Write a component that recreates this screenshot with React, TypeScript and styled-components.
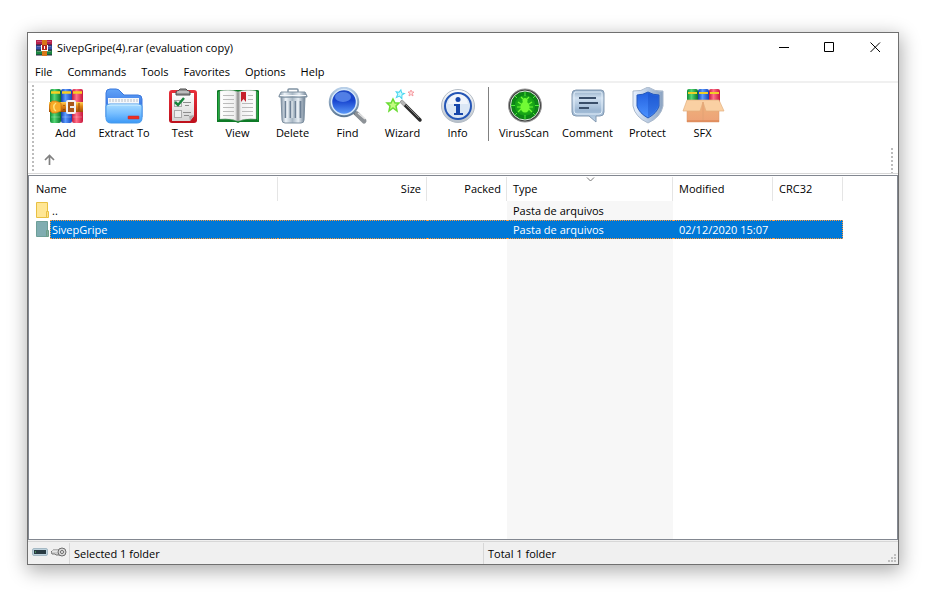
import React from "react";
import styled, { createGlobalStyle, css } from "styled-components";

const GlobalStyle = createGlobalStyle`
  * { box-sizing: border-box; }
  body {
    margin: 0;
    background: #fff;
    color: #000;
    font: 11px/16px "Open Sans", "Noto Sans", sans-serif;
  }
  button { font: inherit; color: inherit; background: none; border: 0; padding: 0; margin: 0; }
`;

const Page = styled.div`
  display: grid;
  min-height: 100vh;
  padding: 32px 42px 37px 27px;
`;

const Window = styled.main`
  display: flex;
  flex-direction: column;
  min-width: 0;
  background: #fff;
  border: 1px solid #707070;
  box-shadow: 1px 5px 18px 1px rgba(0, 0, 0, 0.33);
`;

const TitleBar = styled.header`
  display: flex;
  align-items: center;
  height: 29px;
  padding-left: 8px;
  gap: 5px;
`;

const Title = styled.h1`
  flex: 1;
  margin: 0;
  font-size: 11px;
  font-weight: 400;
  white-space: nowrap;
`;

const Captions = styled.div`
  display: flex;
`;

const CaptionButton = styled.button`
  display: grid;
  place-items: center;
  width: 46px;
  height: 29px;
`;

const MenuBar = styled.nav`
  display: flex;
  height: 21px;
  border-bottom: 2px solid #f0f0f0;
`;

const MenuItem = styled.button`
  padding: 1px 8px 0 7px;
  height: 19px;
`;

const Rebar = styled.section`
  display: flex;
  height: 91px;
  padding: 0 5px 0 4px;
  border-bottom: 1px solid #d7d7d7;
`;

const Gripper = styled.div`
  width: 2px;
  background: repeating-linear-gradient(transparent 0 2px, #bdbdbd 2px 4px);
`;

const Bands = styled.div`
  display: flex;
  flex: 1;
  flex-direction: column;
`;

const Tools = styled.div`
  display: flex;
  height: 63px;
  padding-left: 4px;
`;

const ToolButton = styled.button<{ $width: number }>`
  display: flex;
  flex-direction: column;
  align-items: center;
  width: ${(p) => p.$width}px;
  padding-top: 4px;
  white-space: nowrap;
  svg { flex: none; }
`;

const ToolDivider = styled.div`
  width: 1px;
  height: 54px;
  margin: 4px 4px 0 3px;
  background: #808080;
`;

const AddressBand = styled.div`
  display: flex;
  flex: 1;
  justify-content: space-between;
  padding-left: 4px;
`;

const UpButton = styled.button`
  display: grid;
  place-items: center;
  width: 22px;
`;

const ListPanel = styled.section`
  display: grid;
  flex: 1;
  margin-top: 1px;
  border: 1px solid #828790;
  overflow: hidden;
`;

const FileTable = styled.table`
  width: 814px;
  table-layout: fixed;
  border-collapse: separate;
  border-spacing: 0;
`;

const Column = styled.col<{ $width: number }>`
  width: ${(p) => p.$width}px;
`;

const Heading = styled.th<{ $right?: boolean }>`
  height: 25px;
  padding: 0 6px;
  font-weight: 400;
  text-align: ${(p) => (p.$right ? "right" : "left")};
  background: linear-gradient(#e5e5e5, #e5e5e5) right bottom / 1px 24px no-repeat #fff;
  &:first-child { padding-left: 7px; }
`;

const SortHeading = styled(Heading)`
  position: relative;
  svg { position: absolute; top: 1px; left: 50%; margin-left: -4px; }
`;

const selectedCell = css`
  color: #fff;
  background: #0078d7;
  border-top: 1px dotted #ff9a3c;
  border-bottom: 1px dotted #ff9a3c;
`;

const Cell = styled.td<{ $sorted?: boolean; $selected?: boolean }>`
  height: 19px;
  padding: 0 6px;
  line-height: 17px;
  white-space: nowrap;
  background: ${(p) => (p.$sorted ? "#f7f7f7" : "transparent")};
  ${(p) => p.$selected && selectedCell}
  &:last-child { border-right: ${(p) => (p.$selected ? "1px dotted #ff9a3c" : "0")}; }
`;

const NameCell = styled.td`
  height: 19px;
  padding: 0;
`;

const NameContent = styled.div`
  display: flex;
  padding-left: 7px;
  svg { flex: none; }
`;

const NameLabel = styled.span<{ $selected?: boolean }>`
  flex: 1;
  height: 19px;
  padding: 1px 0 0 2px;
  line-height: 17px;
  ${(p) => p.$selected && css`${selectedCell} padding: 0 0 0 1px; border-left: 1px dotted #ff9a3c;`}
`;

const Filler = styled.td<{ $sorted?: boolean }>`
  padding: 0;
  background: ${(p) => (p.$sorted ? "#f7f7f7" : "transparent")};
`;

const StatusBar = styled.footer`
  display: grid;
  grid-template-columns: 41px 414px 1fr auto;
  height: 24px;
  padding-top: 1px;
  background: linear-gradient(#d7d7d7, #d7d7d7) 0 1px / 100% 1px no-repeat #f0f0f0;
`;

const StatusCell = styled.div`
  display: flex;
  align-items: center;
  gap: 3px;
  margin-top: 2px;
  padding-left: 4px;
  & + & { border-left: 1px solid #d7d7d7; }
`;

const StatusIcon = styled.svg`
  flex: none;
  align-self: start;
  margin-top: 4px;
`;

const SizeGrip = styled.svg`
  align-self: end;
  margin: 0 2px 2px 0;
`;

const Icon = ({ children }: { children: React.ReactNode }) => (
  <svg width="44" height="38" viewBox="0 0 44 38" aria-hidden="true">{children}</svg>
);

type Stop = [string, string];
const Grad = ({ id, stops, flat }: { id: string; stops: Stop[]; flat?: boolean }) => (
  <linearGradient id={id} x1="0" y1="0" x2={flat ? "1" : "0"} y2={flat ? "0" : "1"}>
    {stops.map(([o, c], i) => <stop key={i} offset={o} stopColor={c} />)}
  </linearGradient>
);

const AddIcon = () => (
  <Icon>
    <Grad id="aG" flat stops={[["0", "#0d8a35"], [".4", "#55d875"], ["1", "#07732a"]]} />
    <Grad id="aB" flat stops={[["0", "#123fa8"], [".4", "#5c9cff"], ["1", "#1642b8"]]} />
    <Grad id="aR" flat stops={[["0", "#c2183d"], [".4", "#ff7189"], ["1", "#c8163b"]]} />
    <Grad id="aS" stops={[["0", "#ffd35a"], [".4", "#e58a16"], ["1", "#a04b06"]]} />
    <rect x="6" y="2" width="11" height="34" rx="2" fill="url(#aG)" />
    <rect x="17" y="2" width="11" height="34" rx="2" fill="url(#aB)" />
    <rect x="28" y="2" width="11" height="34" rx="2" fill="url(#aR)" />
    <path d="M7 5.500h9M18 5.500h9M29 5.500h9" stroke="#f7cf23" strokeWidth="2.500" />
    <path d="M7 30h9M18 30h9M29 30h9" stroke="#fff" strokeOpacity=".25" />
    <path d="M5 15h34v10H5z" fill="url(#aS)" />
    <path d="M8 14h4l5 2v8l-5 2H8c-3-4-3-8 0-12z" fill="#f8aa27" stroke="#c9720f" strokeWidth=".700" />
    <path d="M12 16c-3 2-3 6 0 8" fill="none" stroke="#ffe07c" strokeWidth="1.500" />
    <rect x="23" y="14" width="8" height="12" rx="1" fill="#a8581a" stroke="#f3f3f3" strokeWidth="2" />
    <path d="M26 20h5" stroke="#eee" strokeWidth="2" />
    <path d="M20 18v.500M20 22v.500" stroke="#703208" strokeWidth="2" />
    <path d="M35 16v8" stroke="#8d4709" />
  </Icon>
);

const ExtractIcon = () => (
  <Icon>
    <Grad id="eB" stops={[["0", "#62a5f8"], ["1", "#245bd8"]]} />
    <Grad id="eF" stops={[["0", "#a9ddff"], [".5", "#77beff"], ["1", "#3c99f7"]]} />
    <path d="M4 30V6q0-4 4-4h6q3 0 5 3l3 3h14q4 0 4 4v18z" fill="url(#eB)" stroke="#3b78dd" />
    <path d="M6 11h31v9H6z" fill="#f5f8fb" />
    <path d="M8 12v3m3-3v3m3-3v3m3-3v3m3-3v3m3-3v3m3-3v3m3-3v3m3-3v3m3-3v3" stroke="#b8bec6" />
    <path d="M4 19q0-2 4-2h28q4 0 4 2v12q0 5-5 5H9q-5 0-5-5z" fill="url(#eF)" stroke="#4699eb" />
    <path d="M6 19q0-1 3-1h26q3 0 3 1" fill="none" stroke="#d5f1ff" />
    <rect x="26" y="29" width="11" height="3" rx=".500" fill="#ed2e20" stroke="#bb2f34" strokeWidth=".500" />
  </Icon>
);

const TestIcon = () => (
  <Icon>
    <Grad id="tR" stops={[["0", "#e9313b"], ["1", "#be101c"]]} />
    <Grad id="tP" stops={[["0", "#fff"], ["1", "#d4d4d4"]]} />
    <rect x="8" y="3" width="28" height="33" rx="3" fill="url(#tR)" />
    <path d="M11 6h22v23l-4 5H11z" fill="url(#tP)" />
    <path d="M33 28l-5 1 1 5z" fill="#aaa" />
    <path d="M15 8V5q0-1 2-1l2-2h6l2 2q2 0 2 1v3z" fill="#929292" stroke="#4c4c4c" />
    <path d="M16 5h12" stroke="#e8e8e8" />
    <rect x="13.500" y="13.500" width="7" height="6" fill="#eee" stroke="#aaa" />
    <rect x="13.500" y="23.500" width="7" height="7" fill="#eee" stroke="#aaa" />
    <path d="M14 15l3 3 6-7" fill="none" stroke="#16853b" strokeWidth="2.500" />
    <path d="M22 15.500h8M24 18.500h4M22 25.500h8M23 28.500h5" stroke="#8d8d8d" />
  </Icon>
);

const ViewIcon = () => (
  <Icon>
    <Grad id="vP" flat stops={[["0", "#fff"], [".42", "#eee"], [".5", "#8c8c8c"], [".58", "#f0f0f0"], ["1", "#fff"]]} />
    <path d="M1 4q0-1 2-1h38q2 0 2 1v31H24l-2 1-2-1H1z" fill="#0d7a26" />
    <path d="M2 5h1v28H2zM41 5h1v28h-1z" fill="#25aa40" />
    <path d="M4 4q11-2 18 1 7-3 18-1v28q-11-1-18 2-7-3-18-2z" fill="url(#vP)" stroke="#c9c9c9" strokeWidth=".500" />
    <path d="M7 8.500h11M7 12.500h11M7 16.500h11M7 20.500h11M7 24.500h11M7 28.500h11M26 16.500h11M26 20.500h11M26 24.500h11M26 28.500h11M32 8.500h5M32 12.500h5" stroke="#bbb" />
    <path d="M25 5h5v10l-2.500-3-2.500 3z" fill="#c61f2b" />
  </Icon>
);

const DeleteIcon = () => (
  <Icon>
    <Grad id="dM" flat stops={[["0", "#8193a5"], [".2", "#eef4f9"], [".48", "#a9b8c5"], [".72", "#e7eef4"], ["1", "#6c7f92"]]} />
    <path d="M17 6V3q0-1 1-1h8q1 0 1 1v3" fill="none" stroke="#8092a3" strokeWidth="1.500" />
    <path d="M10 10h24l-1 23q0 3-3 3H14q-3 0-3-3z" fill="url(#dM)" stroke="#7d8fa0" />
    <path d="M14.500 14v17M19.500 14v17M24.500 14v17M29.500 14v17" stroke="#6e8196" strokeWidth="1.800" />
    <path d="M16 14v17M21 14v17M26 14v17" stroke="#f3f7fa" />
    <path d="M8 9l2-4h24l2 4v1H8z" fill="url(#dM)" stroke="#8294a4" />
    <path d="M9 8.500h26" stroke="#f5f8fb" />
  </Icon>
);

const FindIcon = () => (
  <Icon>
    <Grad id="fB" stops={[["0", "#224cc2"], [".45", "#1744cf"], ["1", "#65a6ff"]]} />
    <Grad id="fG" stops={[["0", "#b8cfe8"], ["1", "#5d7894"]]} />
    <path d="M28 25l8 7" stroke="#606970" strokeWidth="4" />
    <path d="M31 27l7 7" stroke="#8d9297" strokeWidth="5" strokeLinecap="round" />
    <path d="M32 26l7 6" stroke="#e4e4e4" strokeWidth="1.500" />
    <circle cx="18" cy="15" r="14" fill="url(#fB)" stroke="url(#fG)" strokeWidth="2.500" />
    <circle cx="18" cy="15" r="12.500" fill="none" stroke="#d8eafa" strokeWidth="1.500" />
    <ellipse cx="17" cy="10" rx="8" ry="5" fill="#6f9cf5" opacity=".65" />
  </Icon>
);

const star = "M0-6 2-2 6-2 3 1 4 6 0 3-4 6-3 1-6-2-2-2z";
const WizardIcon = () => (
  <Icon>
    <g strokeWidth="1.500">
      <path transform="translate(12 18)" d={star} fill="#c4fb80" stroke="#6bdc35" />
      <path transform="translate(19 7) rotate(12) scale(.7)" d={star} fill="#c9fbff" stroke="#4cd6ef" />
      <path transform="translate(30 6) scale(.5)" d={star} fill="#ffdcdc" stroke="#f28a92" />
    </g>
    <path d="M21 15l18 18" stroke="#2b2b2b" strokeWidth="3.500" strokeLinecap="round" />
    <path d="M20 14l4 4" stroke="#b5b5b5" strokeWidth="3.500" />
    <path d="M25 18l13 13" stroke="#858585" />
  </Icon>
);

const InfoIcon = () => (
  <Icon>
    <Grad id="iS" stops={[["0", "#fff"], ["1", "#b7c0ca"]]} />
    <circle cx="22" cy="19" r="16.500" fill="url(#iS)" stroke="#b4bcc5" />
    <circle cx="22" cy="19" r="13" fill="#dbe7f5" stroke="#2455b5" strokeWidth="2" />
    <path d="M12 17a10 10 0 0 1 20 0" fill="#fff" opacity=".6" />
    <circle cx="22" cy="12.500" r="2.500" fill="#1646aa" />
    <path d="M18 17h6v9h3v2h-9v-2h2v-7h-2z" fill="#1646aa" />
  </Icon>
);

const VirusIcon = () => (
  <Icon>
    <radialGradient id="vG"><stop stopColor="#2fc31c" /><stop offset=".6" stopColor="#17a516" /><stop offset="1" stopColor="#087513" /></radialGradient>
    <circle cx="23" cy="18.500" r="16.500" fill="#444" stroke="#9a9a9a" />
    <circle cx="23" cy="18.500" r="14.500" fill="url(#vG)" stroke="#d9e8d9" />
    <circle cx="23" cy="18.500" r="11" fill="none" stroke="#0a7d1a" />
    <path d="M23 5v4m0 19v4M9 18.500h4m20 0h4M13 9l2 2M33 9l-2 2M13 28l2-2M33 28l-2-2" stroke="#4ff03a" />
    <ellipse cx="23" cy="20" rx="4.500" ry="5.500" fill="#72fb35" />
    <circle cx="23" cy="13.500" r="2.500" fill="#72fb35" />
    <path d="M19 17l-3-2m3 5h-4m4 2l-3 3m11-8l3-2m-3 5h4m-4 2l3 3M21 12l-2-2m6 2l2-2" stroke="#72fb35" strokeWidth="1.200" />
  </Icon>
);

const CommentIcon = () => (
  <Icon>
    <Grad id="cB" stops={[["0", "#8ea9c4"], [".25", "#d0e0f0"], [".65", "#9bb6d2"], ["1", "#c2d7ea"]]} />
    <path d="M10 3h25q3 0 3 3v19q0 4-4 4h-4v6l-7-6H10q-4 0-4-4V7q0-4 4-4z" fill="url(#cB)" stroke="#8399b1" />
    <path d="M9 5h26q1 0 1 2v17q0 3-3 3H11q-3 0-3-3V7z" fill="none" stroke="#e3effa" />
    <path d="M13 11h17M13 16h19M13 21h10" stroke="#3a4f6a" strokeWidth="2" />
  </Icon>
);

const ProtectIcon = () => (
  <Icon>
    <Grad id="pS" flat stops={[["0", "#e7f1ff"], ["1", "#8ba3c2"]]} />
    <Grad id="pB" stops={[["0", "#2360e0"], ["1", "#4c93ff"]]} />
    <path d="M22 0q7 5 15 4v15q-2 11-15 17Q9 30 7 19V4q8 1 15-4z" fill="url(#pS)" stroke="#a9b8cb" />
    <path d="M22 5q5 3 11 3v11q-2 7-11 12-9-5-11-12V8q6 0 11-3z" fill="url(#pB)" stroke="#2459bd" />
    <path d="M22 6q5 3 10 3v10q-2 6-10 11z" fill="#1247bd" opacity=".35" />
  </Icon>
);

const SfxIcon = () => (
  <Icon>
    <Grad id="sC" stops={[["0", "#efb37b"], ["1", "#eda277"]]} />
    <rect x="6" y="2" width="11" height="16" rx="2" fill="url(#aG)" />
    <rect x="17" y="2" width="11" height="16" rx="2" fill="url(#aB)" />
    <rect x="28" y="2" width="11" height="16" rx="2" fill="url(#aR)" />
    <path d="M7 6h9M18 6h9M29 6h9" stroke="#efcf27" strokeWidth="2" />
    <path d="M6 14h32v21H6z" fill="url(#sC)" stroke="#da9666" strokeWidth=".500" />
    <path d="M6 13L2 24h17l3-9 3 9h18l-5-11z" fill="#fad0a3" stroke="#e3b07f" strokeWidth=".700" />
    <path d="M22 15v20" stroke="#e2a274" />
    <path d="M6 34h32" stroke="#d77e4c" />
  </Icon>
);

const AppLogo = () => (
  <svg width="16" height="16" viewBox="0 0 16 16" aria-hidden="true">
    <path fill="#b6204d" d="M0 0h16v5H0z" /><path fill="#3651a9" d="M0 5h16v5H0z" /><path fill="#19853f" d="M0 10h16v5H0z" />
    <path d="M0 5h16M0 10h16M0 15h16" stroke="#27203c" />
    <path d="M1 1.500h14M1 6.500h14M1 11.500h14" stroke="#e6b8cd" strokeOpacity=".35" />
    <path fill="#d87619" d="M6 0h5v16H6z" /><path d="M6 5h5v5H6z" fill="#b3261e" />
    <path d="M5.500 5v5.500M11.500 5v5.500M8.500 6v3M5 10.500h7" stroke="#fff" />
  </svg>
);

const FolderIcon = ({ selected }: { selected?: boolean }) => (
  <svg width="14" height="19" viewBox="0 0 14 19" aria-hidden="true">
    <path d="M.500 1.500h11v15H.500z" fill={selected ? "#80adb1" : "#ffe694"} stroke={selected ? "#6d9f98" : "#e8c043"} />
    <path d="M10.500 10.500h2v6h-2z" fill={selected ? "#80aaa2" : "#ffe28a"} stroke={selected ? "#6d9f88" : "#e8c043"} />
  </svg>
);

const DriveIcon = () => (
  <StatusIcon width="16" height="12" viewBox="0 0 16 12" aria-hidden="true">
    <rect x=".500" y="1.500" width="15" height="7" rx="1.500" fill="#bdd1dc" stroke="#a5b9c4" />
    <rect x="2" y="3" width="12" height="4" fill="#293b43" /><path d="M3 5h1" stroke="#66dd71" />
  </StatusIcon>
);

const KeyIcon = () => (
  <StatusIcon width="16" height="12" viewBox="0 0 16 12" aria-hidden="true">
    <path d="M8 3H2L0 5l1 2h3l1 1h4" fill="#ccc" stroke="#777" />
    <path d="M1 4h7" stroke="#fff" />
    <circle cx="11" cy="5" r="4" fill="#d8d8d8" stroke="#6d6d6d" />
    <circle cx="11" cy="5" r="1.500" fill="#fff" stroke="#666" />
  </StatusIcon>
);

const archiveTools = [
  { label: "Add", width: 55, Art: AddIcon },
  { label: "Extract To", width: 62, Art: ExtractIcon },
  { label: "Test", width: 55, Art: TestIcon },
  { label: "View", width: 55, Art: ViewIcon },
  { label: "Delete", width: 55, Art: DeleteIcon },
  { label: "Find", width: 55, Art: FindIcon },
  { label: "Wizard", width: 55, Art: WizardIcon },
  { label: "Info", width: 55, Art: InfoIcon },
];

const extraTools = [
  { label: "VirusScan", width: 62, Art: VirusIcon },
  { label: "Comment", width: 65, Art: CommentIcon },
  { label: "Protect", width: 55, Art: ProtectIcon },
  { label: "SFX", width: 55, Art: SfxIcon },
];

const renderTool = ({ label, width, Art }: (typeof archiveTools)[number]) => (
  <ToolButton key={label} type="button" $width={width}><Art />{label}</ToolButton>
);

const files = [
  { name: "..", type: "Pasta de arquivos", modified: "", selected: false },
  { name: "SivepGripe", type: "Pasta de arquivos", modified: "02/12/2020 15:07", selected: true },
];

export default function App() {
  return (
    <Page>
      <GlobalStyle />
      <Window>
        <TitleBar>
          <AppLogo />
          <Title>SivepGripe(4).rar (evaluation copy)</Title>
          <Captions>
            <CaptionButton type="button" aria-label="Minimize">
              <svg width="11" height="11" viewBox="0 0 11 11"><path d="M1 5.500h10" stroke="#000" /></svg>
            </CaptionButton>
            <CaptionButton type="button" aria-label="Maximize">
              <svg width="11" height="11" viewBox="0 0 11 11"><path d="M.500 .500h9v9h-9z" fill="none" stroke="#000" /></svg>
            </CaptionButton>
            <CaptionButton type="button" aria-label="Close">
              <svg width="11" height="11" viewBox="0 0 11 11"><path d="M.500 .500l9.500 9.500m0-9.500l-9.500 9.500" stroke="#000" /></svg>
            </CaptionButton>
          </Captions>
        </TitleBar>
        <MenuBar>
          {["File", "Commands", "Tools", "Favorites", "Options", "Help"].map((m) => (
            <MenuItem key={m} type="button">{m}</MenuItem>
          ))}
        </MenuBar>
        <Rebar>
          <Gripper />
          <Bands>
            <Tools>
              {archiveTools.map(renderTool)}
              <ToolDivider />
              {extraTools.map(renderTool)}
            </Tools>
            <AddressBand>
              <UpButton type="button" aria-label="Up one level">
                <svg width="11" height="12" viewBox="0 0 11 12"><path d="M5.500 11V2M1 6l4.500-4.500L10 6" fill="none" stroke="#808080" strokeWidth="1.700" /></svg>
              </UpButton>
              <Gripper />
            </AddressBand>
          </Bands>
        </Rebar>
        <ListPanel>
          <FileTable>
            <colgroup>
              <Column $width={249} /><Column $width={149} /><Column $width={80} />
              <Column $width={166} /><Column $width={100} /><Column $width={70} />
            </colgroup>
            <thead>
              <tr>
                <Heading>Name</Heading>
                <Heading $right>Size</Heading>
                <Heading $right>Packed</Heading>
                <SortHeading aria-sort="ascending">
                  Type
                  <svg width="9" height="5" viewBox="0 0 9 5"><path d="M1 .500l3.500 3.500L8 .500" fill="none" stroke="#777" /></svg>
                </SortHeading>
                <Heading>Modified</Heading>
                <Heading>CRC32</Heading>
              </tr>
            </thead>
            <tbody>
              {files.map((f) => (
                <tr key={f.name}>
                  <NameCell>
                    <NameContent>
                      <FolderIcon selected={f.selected} />
                      <NameLabel $selected={f.selected}>{f.name}</NameLabel>
                    </NameContent>
                  </NameCell>
                  <Cell $selected={f.selected} />
                  <Cell $selected={f.selected} />
                  <Cell $selected={f.selected} $sorted={!f.selected}>{f.type}</Cell>
                  <Cell $selected={f.selected}>{f.modified}</Cell>
                  <Cell $selected={f.selected} />
                </tr>
              ))}
              <tr aria-hidden="true">
                <Filler colSpan={3} /><Filler $sorted /><Filler colSpan={2} />
              </tr>
            </tbody>
          </FileTable>
        </ListPanel>
        <StatusBar>
          <StatusCell><DriveIcon /><KeyIcon /></StatusCell>
          <StatusCell>Selected 1 folder</StatusCell>
          <StatusCell>Total 1 folder</StatusCell>
          <SizeGrip width="8" height="8" viewBox="0 0 8 8" aria-hidden="true">
            <path d="M6 0h2v2H6zM3 3h2v2H3zM6 3h2v2H6zM0 6h2v2H0zM3 6h2v2H3zM6 6h2v2H6z" fill="#bfbfbf" />
          </SizeGrip>
        </StatusBar>
      </Window>
    </Page>
  );
}
